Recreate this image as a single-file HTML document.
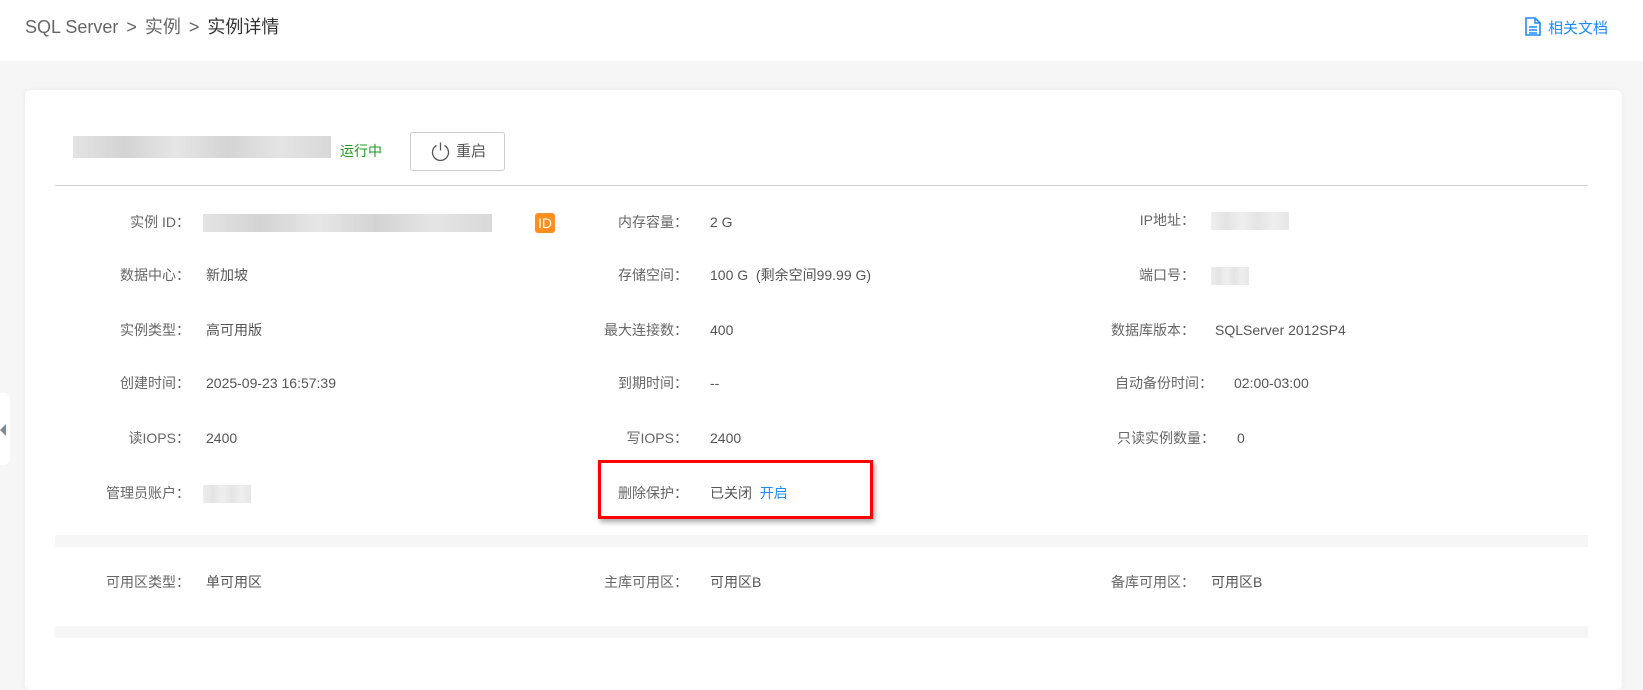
<!DOCTYPE html>
<html><head><meta charset="utf-8"><style>
*{margin:0;padding:0;box-sizing:border-box}
body{width:1643px;height:638px;overflow:hidden;background:#f6f6f6;font-family:"Liberation Sans","Noto Sans CJK SC",sans-serif;font-size:14px;color:#555;position:relative}
.hdr{position:absolute;left:0;top:0;width:1643px;height:61px;background:#fff}
.bc{position:absolute;left:25px;top:13px;font-size:18px;color:#666;white-space:nowrap}
.bc i{font-style:normal;margin:0 8px}
.bc b{font-weight:normal;color:#333}
.doc{position:absolute;left:1525px;top:17px;color:#1a8cff;font-size:15px;white-space:nowrap}
.card{position:absolute;left:25px;top:90px;width:1597px;height:600px;background:#fff;border-radius:6px;box-shadow:0 0 6px rgba(0,0,0,.05)}
.a{position:absolute;white-space:nowrap;line-height:18px}
.l{text-align:right;color:#666}
.blur{position:absolute;background:linear-gradient(90deg,#ddd,#c8c8c8 20%,#e0e0e0 40%,#c9c9c9 60%,#dedede 80%,#cfcfcf);opacity:.8}
.band{position:absolute;left:55px;width:1533px;background:#f6f6f6}
</style></head><body>
<div class="hdr"></div>
<div class="bc">SQL Server<i>&gt;</i>实例<i>&gt;</i><b>实例详情</b></div>
<div class="doc"><svg width="16" height="19" viewBox="0 0 16 19" style="vertical-align:-3px;margin-right:7px"><path d="M1 1h9l5 5v12H1z" fill="none" stroke="#1a8cff" stroke-width="1.6"/><path d="M10 1v5h5M4 10h8M4 13h8M4 16h8" fill="none" stroke="#1a8cff" stroke-width="1.4"/></svg>相关文档</div>
<div style="position:absolute;left:0;top:393px;width:10px;height:72px;background:#fff;border-radius:0 6px 6px 0"></div>
<div style="position:absolute;left:0;top:424px;width:0;height:0;border-top:6px solid transparent;border-bottom:6px solid transparent;border-right:6px solid #7d8b99"></div>
<div class="card"></div>
<div class="blur" style="left:73px;top:136px;width:258px;height:22px"></div>
<div class="a" style="left:340px;top:142px;color:#1f9a1f">运行中</div>
<div style="position:absolute;left:410px;top:132px;width:95px;height:39px;border:1px solid #ccc;border-radius:3px;background:#fff"></div>
<svg style="position:absolute;left:430px;top:141px" width="21" height="21" viewBox="0 0 21 21"><path d="M6.5 4.5A8 8 0 1 0 14.5 4.5" fill="none" stroke="#555" stroke-width="1.3"/><path d="M10.5 1.5v8" stroke="#555" stroke-width="1.3"/></svg>
<div class="a" style="left:456px;top:143px;color:#555;font-size:15px">重启</div>
<div style="position:absolute;left:55px;top:185px;width:1533px;height:1px;background:#d4d4d4"></div>

<div class="a l" style="right:1453px;top:213px">实例 ID：</div>
<div class="blur" style="left:203px;top:214px;width:289px;height:18px"></div>
<div style="position:absolute;left:535px;top:213px;width:20px;height:20px;background:#ff8f1f;border-radius:3px;color:#fff;font-size:14px;text-align:center;line-height:20px">ID</div>
<div class="a l" style="right:1453px;top:266px">数据中心：</div><div class="a" style="left:206px;top:266px">新加坡</div>
<div class="a l" style="right:1453px;top:321px">实例类型：</div><div class="a" style="left:206px;top:321px">高可用版</div>
<div class="a l" style="right:1453px;top:374px">创建时间：</div><div class="a" style="left:206px;top:374px">2025-09-23 16:57:39</div>
<div class="a l" style="right:1453px;top:429px">读IOPS：</div><div class="a" style="left:206px;top:429px">2400</div>
<div class="a l" style="right:1453px;top:484px">管理员账户：</div><div class="blur" style="left:203px;top:485px;width:48px;height:18px;opacity:.5"></div>
<div class="a l" style="right:1453px;top:573px">可用区类型：</div><div class="a" style="left:206px;top:573px">单可用区</div>

<div class="a l" style="right:955px;top:213px">内存容量：</div><div class="a" style="left:710px;top:213px">2 G</div>
<div class="a l" style="right:955px;top:266px">存储空间：</div><div class="a" style="left:710px;top:266px">100 G &nbsp;(剩余空间99.99 G)</div>
<div class="a l" style="right:955px;top:321px">最大连接数：</div><div class="a" style="left:710px;top:321px">400</div>
<div class="a l" style="right:955px;top:374px">到期时间：</div><div class="a" style="left:710px;top:374px">--</div>
<div class="a l" style="right:955px;top:429px">写IOPS：</div><div class="a" style="left:710px;top:429px">2400</div>
<div class="a l" style="right:955px;top:484px">删除保护：</div><div class="a" style="left:710px;top:484px">已关闭 &nbsp;<span style="color:#1a8cff">开启</span></div>
<div class="a l" style="right:955px;top:573px">主库可用区：</div><div class="a" style="left:710px;top:573px">可用区B</div>
<div style="position:absolute;left:598px;top:460px;width:275px;height:59px;border:3px solid #f00;box-shadow:2px 3px 5px rgba(0,0,0,.35)"></div>

<div class="a l" style="right:448px;top:211px">IP地址：</div><div class="blur" style="left:1211px;top:212px;width:78px;height:18px;opacity:.5"></div>
<div class="a l" style="right:448px;top:266px">端口号：</div><div class="blur" style="left:1211px;top:267px;width:38px;height:18px;opacity:.5"></div>
<div class="a l" style="right:448px;top:321px">数据库版本：</div><div class="a" style="left:1215px;top:321px">SQLServer 2012SP4</div>
<div class="a l" style="right:430px;top:374px">自动备份时间：</div><div class="a" style="left:1234px;top:374px">02:00-03:00</div>
<div class="a l" style="right:428px;top:429px">只读实例数量：</div><div class="a" style="left:1237px;top:429px">0</div>
<div class="a l" style="right:448px;top:573px">备库可用区：</div><div class="a" style="left:1211px;top:573px">可用区B</div>

<div class="band" style="top:535px;height:12px"></div>
<div class="band" style="top:626px;height:12px"></div>
</body></html>
